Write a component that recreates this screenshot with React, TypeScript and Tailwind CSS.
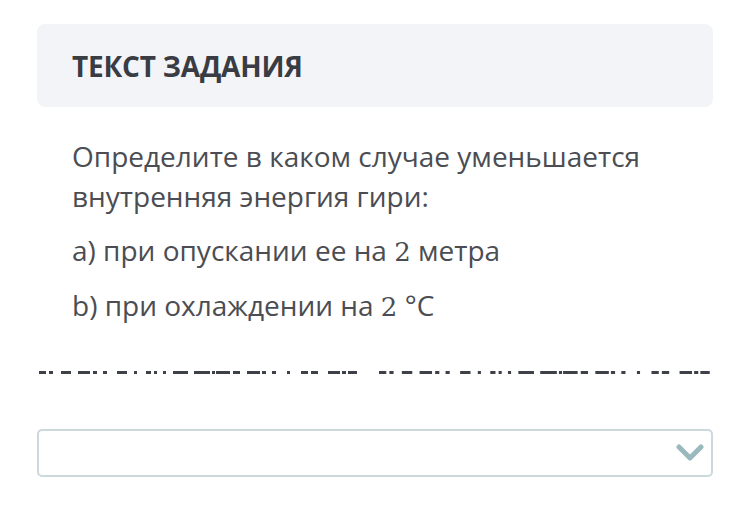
import React from 'react';

const dashes: [number, number][] = [
  [0, 7], [10, 4], [22, 10], [39, 12], [54, 4], [64, 4], [78, 10], [95, 3], [107, 5], [115, 3],
  [124, 3], [134, 15], [155, 16], [173, 3], [177, 14], [194, 7], [208, 13], [223, 4], [233, 4],
  [248, 3], [262, 7], [272, 7], [289, 12], [303, 4], [309, 9],
];

function Scribble() {
  return (
    <svg width="676" height="6" viewBox="0 0 676 6" className="block">
      {[
        [0, 1],
        [340, 1.04],
      ].map(([off, k]) =>
        dashes.map(([x, w], i) => (
          <rect key={`${off}-${i}`} x={x * k + off + 2} y={1} width={w * k} height={3} fill="#3f4148" />
        )),
      )}
    </svg>
  );
}

const two = <span className="font-['DejaVu_Serif',serif] text-[26px] leading-none">2</span>;

export default function App() {
  return (
    <div className="w-[750px] h-[507px] bg-white font-['Open_Sans',sans-serif] pt-6 px-[37px]">
      <div className="h-[83px] rounded-lg bg-[#f3f4f7] flex items-center pl-[35px]">
        <h2 className="text-[28px] font-bold text-[#3a3c44] tracking-[-0.2px]">ТЕКСТ ЗАДАНИЯ</h2>
      </div>

      <div className="px-[35px] pt-[29px] text-[28px] leading-[40px] text-[#4b4d52]">
        <p>
          Определите в каком случае уменьшается
          <br />
          внутренняя энергия гири:
        </p>
        <p className="mt-[14px]">а) при опускании ее на {two} метра</p>
        <p className="mt-[15px]">b) при охлаждении на {two} °C</p>
      </div>

      <div className="mt-[45px]">
        <Scribble />
      </div>

      <div className="mt-[53px] h-[48px] rounded-[5px] border-2 border-[#cbd9dc] flex items-center justify-end pr-[7px]">
        <svg width="28" height="18" viewBox="0 0 28 18">
          <path d="M3 3 L14 14 L25 3" fill="none" stroke="#9bb8be" strokeWidth="5" strokeLinecap="round" strokeLinejoin="round" />
        </svg>
      </div>
    </div>
  );
}
